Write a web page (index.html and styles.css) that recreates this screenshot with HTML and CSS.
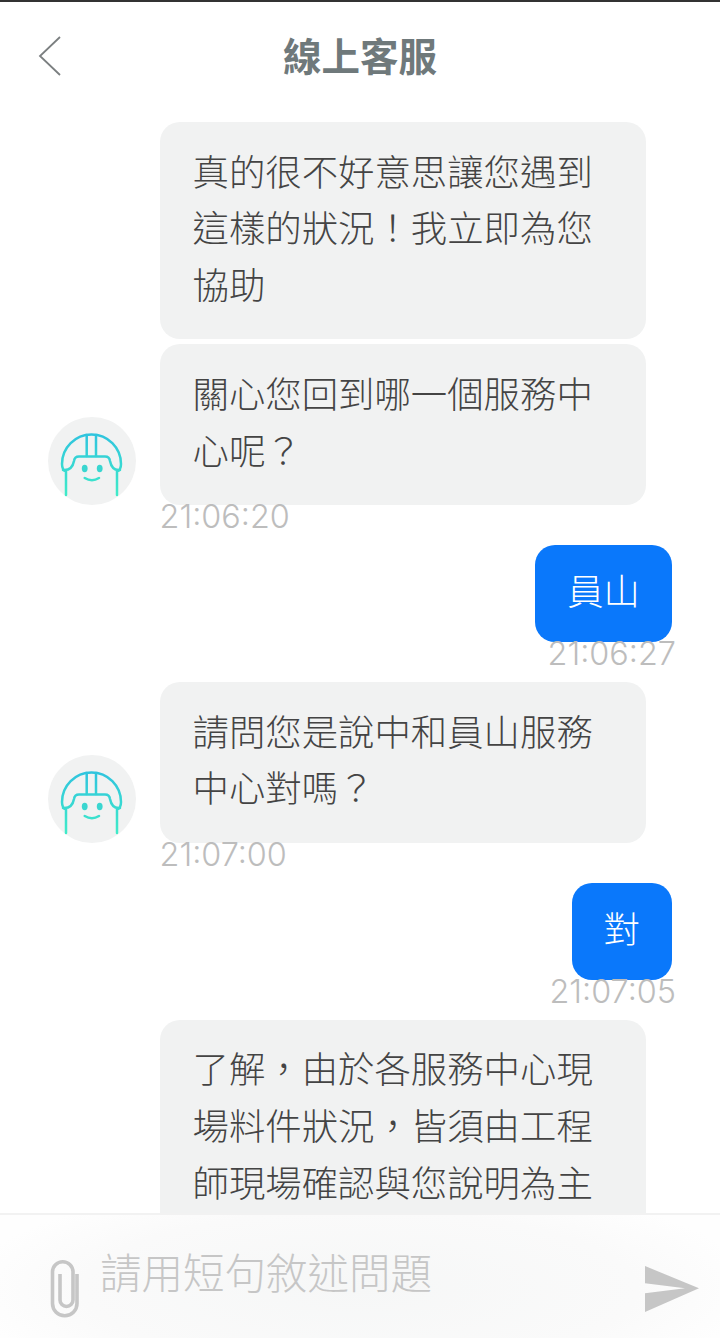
FILE: index.html
```html
<!DOCTYPE html>
<html lang="zh-Hant">
<head>
<meta charset="utf-8">
<title>線上客服</title>
<link rel="stylesheet" href="styles.css">
</head>
<body>
<div class="app">
  <header class="topbar">
    <svg class="back" viewBox="0 0 24 40" width="24" height="40"><path d="M22 1 L2 20 L22 39" fill="none" stroke="#7b7f80" stroke-width="1.8"/></svg>
    <h1 class="title">線上客服</h1>
  </header>
  <main class="chat">
    <section class="msg">
      <div class="row">
        <svg class="avatar" viewBox="0 0 88 88" width="88" height="88"><use href="#bot"/></svg>
        <div class="bubbles">
          <p class="bubble">真的很不好意思讓您遇到這樣的狀況！我立即為您協助</p>
          <p class="bubble">關心您回到哪一個服務中心呢？</p>
        </div>
      </div>
      <time class="stamp">21:06:20</time>
    </section>
    <section class="msg mine">
      <p class="bubble own">員山</p>
      <time class="stamp">21:06:27</time>
    </section>
    <section class="msg">
      <div class="row">
        <svg class="avatar" viewBox="0 0 88 88" width="88" height="88"><use href="#bot"/></svg>
        <div class="bubbles">
          <p class="bubble">請問您是說中和員山服務中心對嗎？</p>
        </div>
      </div>
      <time class="stamp">21:07:00</time>
    </section>
    <section class="msg mine">
      <p class="bubble own">對</p>
      <time class="stamp">21:07:05</time>
    </section>
    <section class="msg">
      <div class="row">
        <div class="avatar-gap"></div>
        <div class="bubbles">
          <p class="bubble">了解，由於各服務中心現場料件狀況，皆須由工程師現場確認與您說明為主</p>
        </div>
      </div>
    </section>
  </main>
  <footer class="composer">
    <svg class="clip" viewBox="0 0 32 60" width="32" height="60"><path d="M29 16 V45.5 A12.25 12.25 0 0 1 4.5 45.5 V14 A10.25 10.25 0 0 1 25 14 V42 A6.5 6.5 0 0 1 12 42 V16" fill="none" stroke="#c6c6c6" stroke-width="3.6"/></svg>
    <div class="placeholder">請用短句敘述問題</div>
    <svg class="send" viewBox="0 0 56 48" width="56" height="48"><path d="M1 1 L55 23.3 L1 47 V28.3 L41 23.3 L1 18.3 Z" fill="#c6c6c6"/></svg>
  </footer>
</div>
<svg class="defs" width="0" height="0">
  <defs>
    <linearGradient id="teal" gradientUnits="userSpaceOnUse" x1="0" y1="17" x2="0" y2="79">
      <stop offset="0" stop-color="#2fc4de"/>
      <stop offset="1" stop-color="#40ebc8"/>
    </linearGradient>
    <g id="bot">
      <circle cx="44" cy="44" r="44" fill="#f1f2f2"/>
      <g fill="none" stroke="url(#teal)" stroke-width="2.5" stroke-linecap="round">
        <path d="M18 78 V54.5 Q14 53 14 47 A29.5 29.5 0 0 1 73 47 Q73 53 69 54.5 V78"/>
        <path d="M15 53 Q24 54 26 44 Q26.5 39.5 31 39.5 H57 Q61.5 39.5 62 44 Q64 54 72 53"/>
        <path d="M38.7 18 V39 M48 18 V39"/>
        <path d="M36.7 61 Q44 65.5 51 61"/>
      </g>
      <ellipse cx="36.7" cy="51.5" rx="2.9" ry="3.7" fill="#3ad6d0"/>
      <ellipse cx="51.7" cy="51.5" rx="2.9" ry="3.7" fill="#3ad6d0"/>
    </g>
  </defs>
</svg>
</body>
</html>
```

FILE: styles.css
```css
* { box-sizing: border-box; }
html, body { margin: 0; padding: 0; height: 100%; background: #fff; }
body { font-family: "Noto Sans CJK TC", "Noto Sans", sans-serif; overflow: hidden; }
.app { height: 1338px; width: 720px; display: flex; flex-direction: column; border-top: 2px solid #333; }
.topbar { height: 120px; flex: none; display: flex; align-items: flex-start; justify-content: center; position: relative; }
.back { position: absolute; left: 38px; top: 34px; }
.title { margin: 25px 0 0; font-size: 38.5px; line-height: 54px; font-weight: 700; color: #6f797b; }
.chat { flex: 1; min-height: 0; overflow: hidden; display: flex; flex-direction: column; }
.msg { display: flex; flex-direction: column; flex: none; }
.row { display: flex; align-items: flex-end; padding-left: 48px; gap: 24px; }
.avatar, .avatar-gap { width: 88px; height: 88px; flex: none; }
.bubbles { display: flex; flex-direction: column; gap: 5px; width: 486px; flex: none; }
.bubble { margin: 0; padding: 19.5px 32.5px 27.5px; font-size: 36.4px; line-height: 56.75px; font-weight: 200; color: #444; background: #f1f2f2; border-radius: 20px; }
.stamp { display: block; margin-left: 159.5px; height: 40.25px; font-family: Inter, sans-serif; font-size: 32.4px; line-height: 24px; font-weight: 300; color: #bdbdbd; }
.mine { align-items: flex-end; padding-right: 48px; }
.mine .stamp { margin: 0 -4px 0 0; }
.own { padding: 16px 32px 24px; background: #0a78fb; color: #fff; }
.composer { height: 125px; flex: none; display: flex; align-items: flex-start; border-top: 2px solid #f2f2f2; background: radial-gradient(ellipse 55% 90% at 50% 60%, #f6f7f7 0%, #fafafa 70%, #fefefe 100%); }
.clip { margin: 43px 0 0 48px; flex: none; }
.placeholder { margin: 26px 0 0 20px; font-size: 41.5px; line-height: 60px; font-weight: 200; color: #c6c6c6; flex: 1; }
.send { margin: 50px 20px 0 0; flex: none; }
.defs { position: absolute; }
```
